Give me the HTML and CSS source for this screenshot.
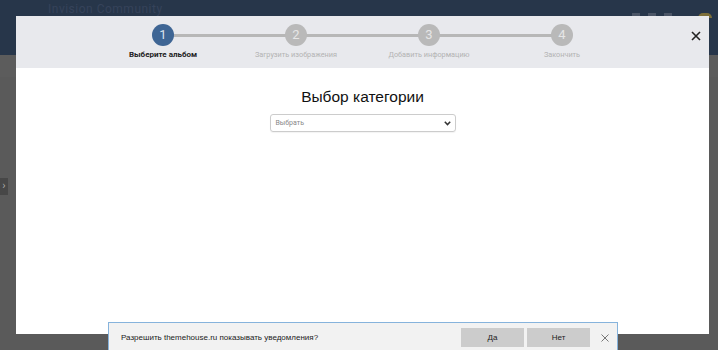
FILE: index.html
```html
<!DOCTYPE html>
<html lang="ru">
<head>
  <meta charset="UTF-8" />
  <title>Выбор категории</title>
  <link rel="stylesheet" href="styles.css">
</head>
<body>
  <!-- Page behind the overlay -->
  <div class="site-header">
    <span class="site-logo">Invision Community</span>
    <div class="site-icons">
      <span class="site-icon"></span>
      <span class="site-icon"></span>
      <span class="site-icon"></span>
      <span class="site-avatar"></span>
    </div>
  </div>
  <div class="site-body">
    <div class="side-tab">›</div>
  </div>

  <!-- Modal -->
  <div class="modal">
    <div class="modal-head">
      <ol class="stepper">
        <li class="step active"><span class="step-num">1</span><span class="step-label">Выберите альбом</span></li>
        <li class="step"><span class="step-num">2</span><span class="step-label">Загрузить изображения</span></li>
        <li class="step"><span class="step-num">3</span><span class="step-label">Добавить информацию</span></li>
        <li class="step"><span class="step-num">4</span><span class="step-label">Закончить</span></li>
      </ol>
      <span class="modal-close">
        <svg width="10" height="10" viewBox="0 0 10 10"><path d="M1 1L9 9M9 1L1 9" stroke="#222" stroke-width="1.6"/></svg>
      </span>
    </div>
    <div class="modal-body">
      <h2 class="modal-title">Выбор категории</h2>
      <div class="select-box">
        <span>Выбрать</span>
        <svg width="7" height="5" viewBox="0 0 7 5"><path d="M0.8 0.8L3.5 3.6L6.2 0.8" fill="none" stroke="#333" stroke-width="1.5"/></svg>
      </div>
    </div>
  </div>

  <!-- Browser notification prompt -->
  <div class="notify">
    <span class="notify-text">Разрешить themehouse.ru показывать уведомления?</span>
    <div class="notify-actions">
      <button class="notify-btn">Да</button>
      <button class="notify-btn">Нет</button>
      <span class="notify-close">
        <svg width="8" height="8" viewBox="0 0 8 8"><path d="M0.5 0.5L7.5 7.5M7.5 0.5L0.5 7.5" stroke="#777" stroke-width="1"/></svg>
      </span>
    </div>
  </div>
</body>
</html>
```

FILE: styles.css
```css
* {
  margin: 0;
  padding: 0;
  box-sizing: border-box;
}
body {
  font-family: Roboto, "Liberation Sans", sans-serif;
  background-color: #505050;
  height: 350px;
  overflow: hidden;
}
/* Page behind the dark overlay */
.site-header {
  height: 55px;
  background-color: #27364a;
  display: flex;
  justify-content: space-between;
  padding: 3px 6px 0 48px;
}
.site-logo {
  display: block;
  height: 12px;
  font-size: 12px;
  line-height: 12px;
  color: #36435a;
  letter-spacing: 0.5px;
}
.site-icons {
  display: flex;
  gap: 8px;
  padding-top: 10px;
}
.site-icon {
  width: 8px;
  height: 3px;
  background-color: #4b5566;
}
.site-avatar {
  width: 14px;
  height: 5px;
  border-radius: 7px 7px 0 0;
  background-color: #7d6f3a;
  margin-left: 18px;
}
.site-body {
  height: 295px;
  background-color: #5a5a5a;
  border-top: 22px solid #5c5c5c;
  padding-top: 101px;
}
.side-tab {
  width: 8px;
  height: 17px;
  background-color: #474747;
  color: #aaa;
  font-size: 11px;
  line-height: 15px;
  text-align: center;
}
/* Modal window */
.modal {
  position: absolute;
  left: 16px;
  top: 16px;
  width: 693px;
  height: 318px;
  background-color: #fff;
}
.modal-head {
  position: relative;
  height: 52px;
  background-color: #e8e9ed;
  display: flex;
  justify-content: center;
}
.stepper {
  list-style: none;
  display: flex;
  padding-top: 8px;
}
.step {
  position: relative;
  width: 133px;
  display: flex;
  flex-direction: column;
  align-items: center;
}
.step:not(:last-child)::after {
  content: "";
  position: absolute;
  left: 50%;
  top: 10px;
  width: 100%;
  height: 3px;
  background-color: #b7b7b7;
}
.step-num {
  position: relative;
  z-index: 1;
  width: 22px;
  height: 22px;
  border-radius: 50%;
  background-color: #b9b9b9;
  color: #e6e6e6;
  font-size: 13px;
  line-height: 22px;
  text-align: center;
}
.step-label {
  margin-top: 4px;
  height: 10px;
  font-size: 7.3px;
  line-height: 10px;
  color: #b3b3b3;
  white-space: nowrap;
}
.step.active .step-num {
  background-color: #3e6594;
  color: #d9e2ee;
}
.step.active .step-label {
  font-size: 8px;
  color: #222;
  font-weight: bold;
}
.modal-close {
  position: absolute;
  right: 8px;
  top: 10px;
}
.modal-body {
  display: flex;
  flex-direction: column;
  align-items: center;
  padding-top: 20px;
}
.modal-title {
  font-family: "Liberation Sans", Arial, sans-serif;
  font-weight: normal;
  font-size: 15.5px;
  color: #111;
  margin-bottom: 8px;
}
.select-box {
  width: 186px;
  height: 18px;
  border: 1px solid #ccc;
  border-radius: 3px;
  display: flex;
  align-items: center;
  justify-content: space-between;
  padding: 0 4px 0 5px;
  font-size: 7px;
  color: #888;
  box-shadow: 0 1px 1px rgba(0, 0, 0, 0.05);
}
/* Notification bar */
.notify {
  position: fixed;
  left: 108px;
  top: 322px;
  width: 510px;
  height: 40px;
  background-color: #f2f2f2;
  border: 1px solid #86b3dc;
  display: flex;
  justify-content: space-between;
  padding: 5px 0 0 12px;
  font-family: "Liberation Sans", Arial, sans-serif;
}
.notify-text {
  font-size: 8px;
  color: #222;
  line-height: 20px;
}
.notify-actions {
  display: flex;
  align-items: flex-start;
  gap: 3px;
}
.notify-btn {
  width: 63px;
  height: 19px;
  border: none;
  background-color: #cccccc;
  font-family: "Liberation Sans", Arial, sans-serif;
  font-size: 8px;
  color: #222;
}
.notify-close {
  width: 24px;
  height: 19px;
  display: flex;
  align-items: center;
  justify-content: center;
}
```
